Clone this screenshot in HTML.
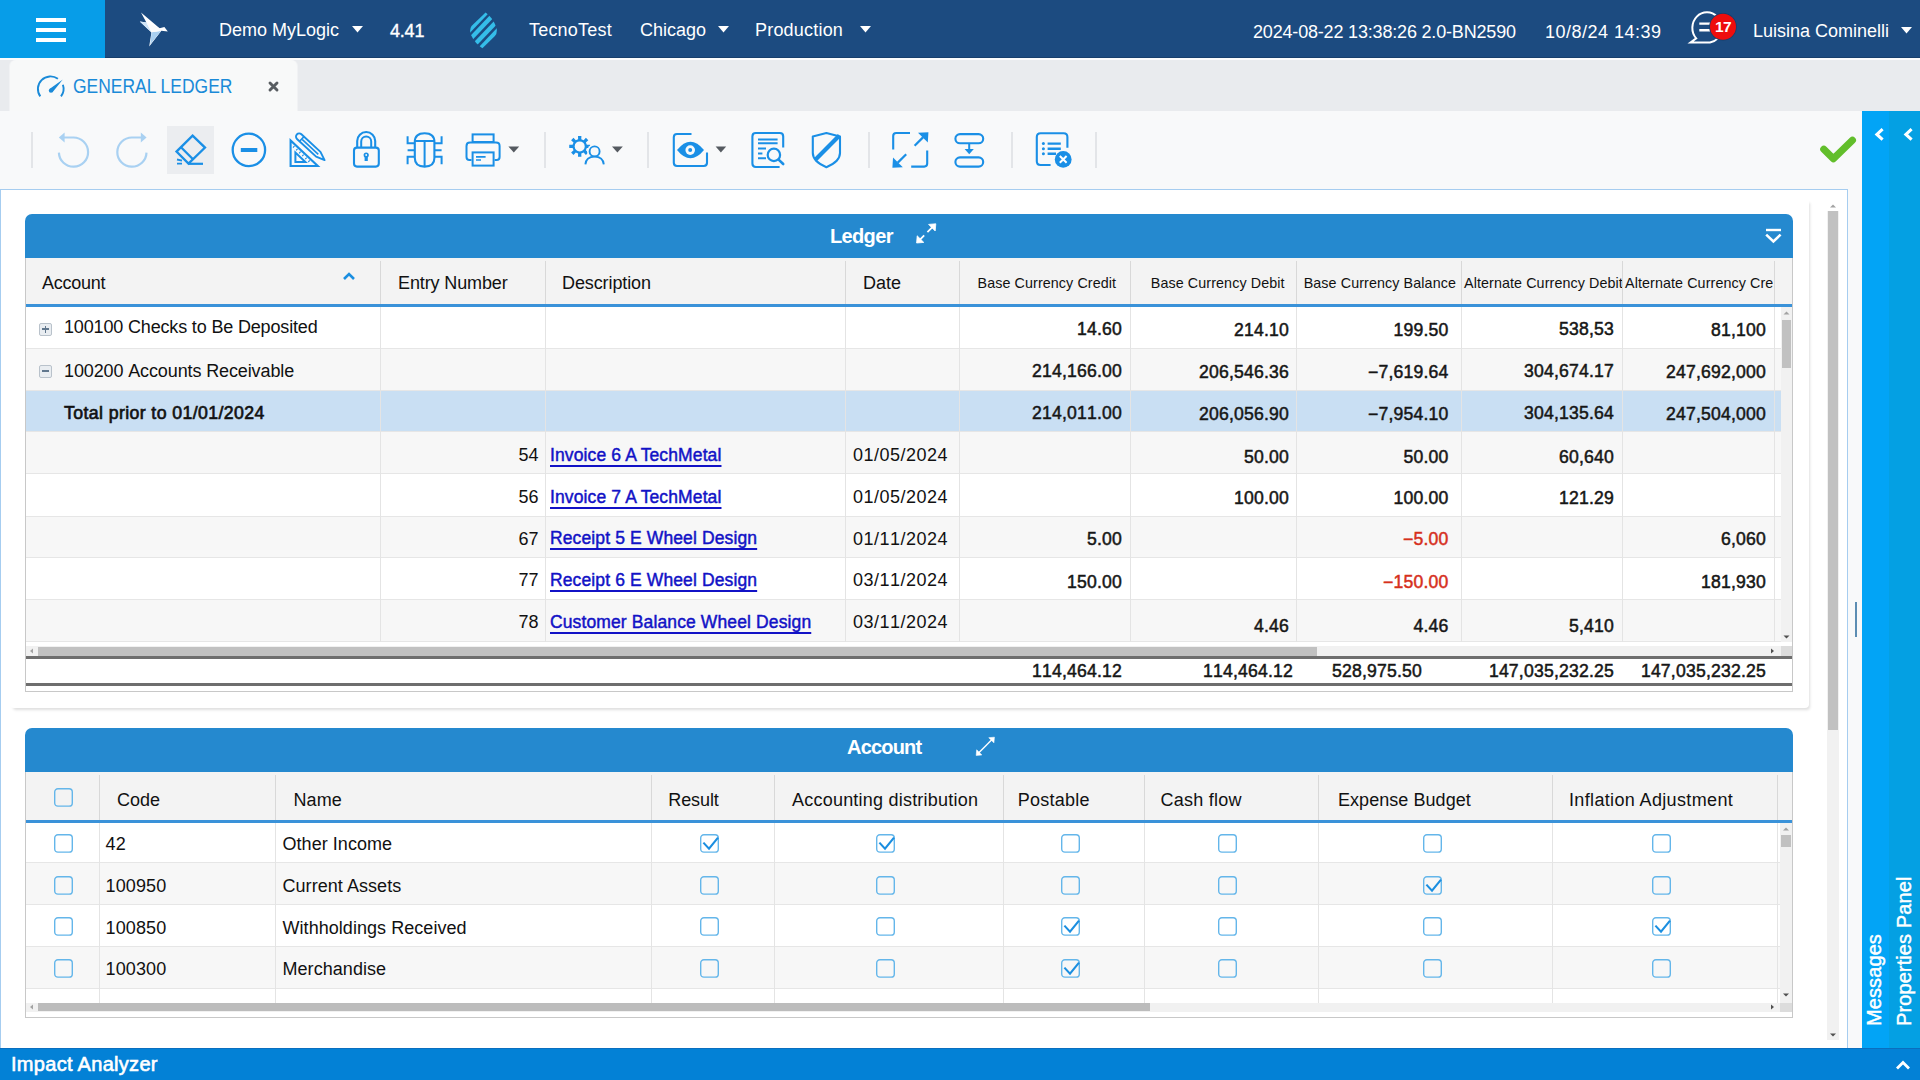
<!DOCTYPE html><html><head><meta charset="utf-8"><style>
html,body{margin:0;padding:0;width:1920px;height:1080px;overflow:hidden;background:#fff;}
body{position:relative;font-family:"Liberation Sans",sans-serif;}
.t{position:absolute;white-space:nowrap;line-height:1;}
.r{position:absolute;}
svg{position:absolute;overflow:visible;}
</style></head><body>

<div class="r" style="left:0px;top:0px;width:1920px;height:58px;background:#1c4b80;"></div>
<div class="r" style="left:0px;top:57px;width:1920px;height:1px;background:#173f6c;"></div>
<div class="r" style="left:0px;top:0px;width:105px;height:58px;background:#079de8;"></div>
<div class="r" style="left:36px;top:18px;width:30px;height:4px;background:#fff;"></div>
<div class="r" style="left:36px;top:28px;width:30px;height:4px;background:#fff;"></div>
<div class="r" style="left:36px;top:38px;width:30px;height:4px;background:#fff;"></div>
<svg style="left:0;top:0" width="200" height="58" viewBox="0 0 200 58"><path d="M141 12.4 L159.6 28.2 L164.4 27 L167.8 31.6 L161.4 30.8 L149.2 46.6 L151.4 32.4 L139.8 21.4 L146.4 22.6 Z" fill="#fff"/><path d="M151.6 32.2 L161 31 L150.2 44.6 Z" fill="#a8cff0"/><path d="M139.8 21.4 L146.4 22.6 L151.6 32.2 Z" fill="#cfe5f8"/><path d="M146.4 22.6 L159.6 28.2 L161.4 30.8 L151.6 32.2 Z" fill="#fbfbfb"/></svg>
<div class="t" style="top:20.76px;font-size:18px;font-weight:400;color:#fff;left:219px;">Demo MyLogic</div>
<svg style="left:352px;top:26px" width="11" height="7" viewBox="0 0 11 7"><path d="M0 0H11L5.5 6.5Z" fill="#fff"/></svg>
<div class="t" style="top:21.66px;font-size:18px;font-weight:400;color:#fff;letter-spacing:-0.2px;left:390px;-webkit-text-stroke:0.35px #fff;">4.41</div>
<svg style="left:0;top:0" width="520" height="58" viewBox="0 0 520 58"><defs><clipPath id="dm"><path d="M485.6 12.4 Q493 17.5 496.6 28 Q497.5 33 495 36 L482.4 48.2 Q475 43.5 471 35 Q469 30 471.5 26 Z"/></clipPath></defs><g clip-path="url(#dm)" stroke="#35bde9" stroke-width="4.3"><path d="M464.20 35.80 L491.80 6.80"/><path d="M467.70 41.70 L495.30 12.70"/><path d="M471.80 47.50 L499.40 18.50"/><path d="M475.20 54.10 L502.80 25.10"/></g></svg>
<div class="t" style="top:20.76px;font-size:18px;font-weight:400;color:#fff;letter-spacing:0.2px;left:529px;">TecnoTest</div>
<div class="t" style="top:20.76px;font-size:18px;font-weight:400;color:#fff;left:640px;">Chicago</div>
<svg style="left:718px;top:26px" width="11" height="7" viewBox="0 0 11 7"><path d="M0 0H11L5.5 6.5Z" fill="#fff"/></svg>
<div class="t" style="top:20.76px;font-size:18px;font-weight:400;color:#fff;letter-spacing:0.2px;left:755px;">Production</div>
<svg style="left:860px;top:26px" width="11" height="7" viewBox="0 0 11 7"><path d="M0 0H11L5.5 6.5Z" fill="#fff"/></svg>
<div class="t" style="top:22.76px;font-size:18px;font-weight:400;color:#fff;letter-spacing:-0.18px;left:1253px;">2024-08-22 13:38:26 2.0-BN2590</div>
<div class="t" style="top:22.76px;font-size:18px;font-weight:400;color:#fff;letter-spacing:0.5px;left:1545px;">10/8/24 14:39</div>
<svg style="left:0;top:0" width="1920" height="58" viewBox="0 0 1920 58"><path d="M1710 42.6 H1690.5 L1696.2 38.4 A14.6 15.6 0 1 1 1717.5 38.6 A14.6 15.6 0 0 1 1710 42.6 Z" fill="none" stroke="#fff" stroke-width="2"/><path d="M1699.3 23.6 H1712 M1699.3 30.3 H1712" stroke="#fff" stroke-width="2.4"/><circle cx="1723" cy="26.8" r="13.8" fill="#173e6a"/><circle cx="1723" cy="26.8" r="13" fill="#ee0d0d"/><text x="1723" y="32.4" text-anchor="middle" font-family="Liberation Sans" font-weight="700" font-size="15.5" fill="#fff" letter-spacing="-0.6">17</text></svg>
<div class="t" style="top:21.76px;font-size:18px;font-weight:400;color:#fff;left:1753px;">Luisina Cominelli</div>
<svg style="left:1901px;top:27px" width="11" height="7" viewBox="0 0 11 7"><path d="M0 0H11L5.5 6.5Z" fill="#fff"/></svg>
<div class="r" style="left:0px;top:58px;width:1920px;height:53px;background:#e9ebee;"></div>
<div class="r" style="left:0px;top:58px;width:1920px;height:2px;background:#fbfcfd;"></div>
<div class="r" style="left:10px;top:60px;width:287px;height:51px;background:#f8f9f9;border-radius:6px 6px 0 0;box-shadow:-1px 0 0 #f1f2f4, 1px 0 0 #f1f2f4;"></div>
<svg style="left:0;top:58px" width="100" height="60" viewBox="0 58 100 60"><path d="M40.3 96.4 A12.6 12.6 0 0 1 57.9 78.8 M62.9 84.8 A12.6 12.6 0 0 1 61 96.4" fill="none" stroke="#1a8ad8" stroke-width="1.9"/><circle cx="51" cy="90.6" r="2.2" fill="#1a8ad8"/><path d="M52.5 92.2 L62.8 79.4 L49.5 89 Z" fill="#1a8ad8"/></svg>
<div class="t" style="top:76.98px;font-size:19.4px;font-weight:400;color:#1a8ad8;left:73px;transform:scaleX(0.9);transform-origin:0 0;">GENERAL LEDGER</div>
<svg style="left:268px;top:81px" width="11" height="11" viewBox="0 0 11 11"><path d="M2 2L9 9M9 2L2 9" stroke="#585d61" stroke-width="2.9" stroke-linecap="round"/></svg>
<div class="r" style="left:0px;top:111px;width:1862px;height:79px;background:#f8f9fa;"></div>
<svg style="left:0;top:0" width="1920" height="1080" viewBox="0 0 1920 1080"><rect x="31" y="132" width="2" height="36" fill="#e3e5e8"/><rect x="544" y="132" width="2" height="36" fill="#e3e5e8"/><rect x="647" y="132" width="2" height="36" fill="#e3e5e8"/><rect x="868" y="132" width="2" height="36" fill="#e3e5e8"/><rect x="1011" y="132" width="2" height="36" fill="#e3e5e8"/><rect x="1095" y="132" width="2" height="36" fill="#e3e5e8"/><rect x="167" y="126" width="47" height="48" fill="#ebedf0"/><path d="M63 137.5 H73.5 A14.6 14.6 0 1 1 58.9 152.6" fill="none" stroke="#a9d1f2" stroke-width="2.2"/><path d="M58.8 137.5 L64.6 132.4 L64.6 142.6 Z" fill="#a9d1f2"/><path d="M142.4 137.5 H131.9 A14.6 14.6 0 1 0 146.5 152.6" fill="none" stroke="#a9d1f2" stroke-width="2.2"/><path d="M146.6 137.5 L140.8 132.4 L140.8 142.6 Z" fill="#a9d1f2"/><path d="M192.6 135.6 L205 147.6 L188.5 163.6 L176.5 151.6 Z" fill="none" stroke="#1a8fe6" stroke-width="2.3" stroke-linejoin="miter"/><path d="M181 147.2 L193 159.2" stroke="#1a8fe6" stroke-width="2.3"/><path d="M188.5 163.8 H203" stroke="#1a8fe6" stroke-width="2.2"/><path d="M177 159.5 L182 160.6 M177 163.6 H182" stroke="#1a8fe6" stroke-width="1.8"/><circle cx="248.9" cy="149.9" r="16.2" fill="none" stroke="#1a8fe6" stroke-width="2.3"/><rect x="240.8" y="148" width="16.5" height="4" fill="#1a8fe6"/><path d="M290.6 140.4 V166 H317.8 Z" fill="none" stroke="#1a8fe6" stroke-width="2.1" stroke-linejoin="miter"/><path d="M295.4 152.6 V162 H305.4 Z" fill="none" stroke="#1a8fe6" stroke-width="2"/><path d="M294.50 145.97 l-1.51 1.60 M297.55 148.86 l-1.51 1.60 M300.61 151.74 l-1.51 1.60 M303.67 154.63 l-1.51 1.60 M306.73 157.52 l-1.51 1.60 M309.78 160.40 l-1.51 1.60 " stroke="#1a8fe6" stroke-width="1.1"/><path d="M297 138.95 A3.2 3.2 0 0 1 301.4 134.25 L320.45 151.9 L324.6 160.1 L316.1 156.6 Z" fill="none" stroke="#1a8fe6" stroke-width="1.9" stroke-linejoin="round"/><path d="M302.4 139.6 L318.3 154.3 M299.6 141.3 L304 136.6" stroke="#1a8fe6" stroke-width="1.6"/><rect x="354" y="147.6" width="24.8" height="19" rx="3" fill="none" stroke="#1a8fe6" stroke-width="2.1"/><path d="M357.2 147.6 V141 A9 9 0 0 1 375.2 141 V147.6" fill="none" stroke="#1a8fe6" stroke-width="2.1"/><path d="M361.2 147.6 V141.5 A5 5 0 0 1 371.2 141.5 V147.6" fill="none" stroke="#1a8fe6" stroke-width="2"/><circle cx="366.2" cy="155" r="2.6" fill="#1a8fe6"/><rect x="364.6" y="155" width="3.2" height="6" fill="#1a8fe6"/><circle cx="366.2" cy="155" r="0.9" fill="#f8f9fa"/><path d="M414.8 142 Q414.8 133.2 424.6 133.2 Q434.4 133.2 434.4 142 V158 Q434.4 166.6 424.6 166.6 Q414.8 166.6 414.8 158 Z" fill="none" stroke="#1a8fe6" stroke-width="2.1"/><path d="M414.8 141 H434.4 M424.6 141 V166.6" stroke="#1a8fe6" stroke-width="2"/><path d="M407.6 136.2 V143.2 H414.8 M407.6 150.2 H414.8 M407.6 164.2 V156.8 H414.8" fill="none" stroke="#1a8fe6" stroke-width="2"/><path d="M441.6 136.2 V143.2 H434.4 M441.6 150.2 H434.4 M441.6 164.2 V156.8 H434.4" fill="none" stroke="#1a8fe6" stroke-width="2"/><rect x="472.6" y="134.4" width="21" height="7.6" fill="none" stroke="#1a8fe6" stroke-width="2"/><path d="M471.5 160 H469.5 Q466.5 160 466.5 157 V146 Q466.5 142.6 470 142.6 H496 Q499.6 142.6 499.6 146 V157 Q499.6 160 496.6 160 H494.6" fill="none" stroke="#1a8fe6" stroke-width="2"/><rect x="472.6" y="152.4" width="21" height="13.2" fill="none" stroke="#1a8fe6" stroke-width="2"/><path d="M476 156.8 H485.6 M476 160 H481" stroke="#1a8fe6" stroke-width="1.7"/><path d="M508.4 146.4 H519.2 L513.8 152.4 Z" fill="#555a60"/><path d="M586.82 144.81 L590.16 144.71 L590.16 148.09 L586.82 147.99 L585.86 150.31 L588.29 152.61 L585.91 154.99 L583.61 152.56 L581.29 153.52 L581.39 156.86 L578.01 156.86 L578.11 153.52 L575.79 152.56 L573.49 154.99 L571.11 152.61 L573.54 150.31 L572.58 147.99 L569.24 148.09 L569.24 144.71 L572.58 144.81 L573.54 142.49 L571.11 140.19 L573.49 137.81 L575.79 140.24 L578.11 139.28 L578.01 135.94 L581.39 135.94 L581.29 139.28 L583.61 140.24 L585.91 137.81 L588.29 140.19 L585.86 142.49 Z" fill="#1a8fe6"/><circle cx="579.7" cy="146.4" r="5" fill="#f8f9fa"/><circle cx="594.6" cy="151.6" r="7.6" fill="#f8f9fa"/><path d="M583 168 Q584 158 594.6 158 Q605 158 606 168 Z" fill="#f8f9fa"/><circle cx="594.6" cy="151.4" r="5" fill="none" stroke="#1a8fe6" stroke-width="1.9"/><path d="M585.4 164.4 Q586 156.6 594.6 156.6 Q603 156.6 603.8 164.4" fill="none" stroke="#1a8fe6" stroke-width="1.9"/><path d="M612 146.4 H622.8 L617.4 152.4 Z" fill="#555a60"/><path d="M691.5 134 H677 Q673.8 134 673.8 137.2 V162.8 Q673.8 166 677 166 H703.8 Q707 166 707 162.8 V152.6" fill="none" stroke="#1a8fe6" stroke-width="2.1"/><path d="M677 150.1 Q690.4 133.6 704 150.1 Q690.4 166.6 677 150.1 Z" fill="#1a8fe6"/><circle cx="690.2" cy="150.1" r="4.8" fill="#f8f9fa"/><circle cx="690.2" cy="150.1" r="2" fill="#1a8fe6"/><path d="M715.6 146.6 H726.2 L720.9 152.6 Z" fill="#555a60"/><path d="M783.2 147.6 V136.4 Q783.2 133 779.8 133 H755.8 Q752.4 133 752.4 136.4 V163.6 Q752.4 167 755.8 167 H779.6" fill="none" stroke="#1a8fe6" stroke-width="2.1"/><path d="M758 139.4 H777.6 M758 143.3 H777.6 M758 148.6 H766 M758 153.4 H762.4 M758 158.2 H766" stroke="#1a8fe6" stroke-width="2"/><circle cx="773.9" cy="154.9" r="6.2" fill="none" stroke="#1a8fe6" stroke-width="2.2"/><path d="M778.6 159.6 L783.2 164" stroke="#1a8fe6" stroke-width="2.6" stroke-linecap="round"/><path d="M826.4 133 L840 136.4 V153 Q840 161.5 826.4 167.2 Q812.8 161.5 812.8 153 V136.4 Z" fill="none" stroke="#1a8fe6" stroke-width="2.1" stroke-linejoin="round"/><path d="M815.6 159.4 L839.4 135.6" stroke="#1a8fe6" stroke-width="4.2"/><path d="M910 133 H896.2 Q893.2 133 893.2 136 V149.4" fill="none" stroke="#1a8fe6" stroke-width="2.1"/><path d="M927.2 150.4 V163.6 Q927.2 166.6 924.2 166.6 H911.2" fill="none" stroke="#1a8fe6" stroke-width="2.1"/><path d="M928.4 132.2 L927.8 142.6 L918 132.8 Z" fill="#1a8fe6"/><path d="M914.6 145.8 L923 137.4" stroke="#1a8fe6" stroke-width="2.2"/><path d="M892.4 167.8 L893 157.4 L902.8 167.2 Z" fill="#1a8fe6"/><path d="M906.2 154.2 L897.8 162.6" stroke="#1a8fe6" stroke-width="2.2"/><rect x="955.4" y="134.1" width="27.8" height="9.2" rx="4.6" fill="none" stroke="#1a8fe6" stroke-width="2.1"/><rect x="955.4" y="157.4" width="27.8" height="9.2" rx="4.6" fill="none" stroke="#1a8fe6" stroke-width="2.1"/><path d="M969.2 143.3 V150" stroke="#1a8fe6" stroke-width="2"/><path d="M964.6 149 H973.8 L969.2 154.2 Z" fill="#1a8fe6"/><path d="M1067.4 147.8 V137 Q1067.4 133.2 1063.6 133.2 H1040.6 Q1036.8 133.2 1036.8 137 V161.2 Q1036.8 165 1040.6 165 H1050.6" fill="none" stroke="#1a8fe6" stroke-width="2.1"/><circle cx="1043.4" cy="143.6" r="1.5" fill="#1a8fe6"/><circle cx="1043.4" cy="148.7" r="1.5" fill="#1a8fe6"/><circle cx="1043.4" cy="153.7" r="1.5" fill="#1a8fe6"/><path d="M1047.6 143.6 H1060.8 M1047.6 148.7 H1060.8 M1047.6 153.7 H1056" stroke="#1a8fe6" stroke-width="2.4"/><circle cx="1063.2" cy="159.4" r="8.4" fill="#1a8fe6"/><path d="M1059.8 156 L1066.6 162.8 M1066.6 156 L1059.8 162.8" stroke="#fff" stroke-width="2"/><path d="M1823.8 149.2 L1833.4 158.8 L1852.4 140.2" fill="none" stroke="#62be2b" stroke-width="7.2" stroke-linecap="round" stroke-linejoin="round"/></svg>
<div class="r" style="left:0px;top:189px;width:1848px;height:859px;background:#ffffff;box-sizing:border-box;border:1px solid #a6cdf0;border-bottom:none;"></div>
<div class="r" style="left:1848px;top:190px;width:14px;height:858px;background:#f8f9fa;"></div>
<div class="r" style="left:1827px;top:211px;width:12px;height:829px;background:#f1f1f1;"></div>
<div class="r" style="left:1828px;top:211px;width:10px;height:519px;background:#c1c1c1;"></div>
<svg style="left:1827px;top:201px" width="12" height="10" viewBox="0 0 12 10"><path d="M3 6.5 L6 3.5 L9 6.5Z" fill="#a3a3a3"/></svg>
<svg style="left:1827px;top:1030px" width="12" height="10" viewBox="0 0 12 10"><path d="M3 3.5 L6 6.5 L9 3.5Z" fill="#505050"/></svg>
<div class="r" style="left:10px;top:199px;width:1799px;height:509px;background:#fff;border-radius:0 0 4px 4px;box-shadow:2px 3px 3px -1px rgba(0,0,0,0.13);"></div>
<div class="r" style="left:25px;top:258px;width:1768px;height:434px;background:#fff;box-sizing:border-box;border:1px solid #c8c8c8;border-top:none;"></div>
<div class="r" style="left:25px;top:214px;width:1768px;height:44px;background:#2589cf;border-radius:7px 7px 0 0;"></div>
<div class="t" style="top:226.07px;font-size:20px;font-weight:700;color:#fff;letter-spacing:-0.65px;left:830px;">Ledger</div>
<svg style="left:0;top:0" width="1920" height="260" viewBox="0 0 1920 260"><path d="M919 240.6 L924.2 235.4 M927.4 232.2 L933.4 226.2" stroke="#fff" stroke-width="1.8"/><path d="M935.8 223.8 L935.2 231 L928.6 224.4 Z M916.6 243 L917.2 235.8 L923.8 242.4 Z" fill="#fff" stroke="#fff" stroke-width="0.8" stroke-linejoin="round"/></svg>
<svg style="left:1763px;top:227px" width="20" height="18" viewBox="0 0 20 18"><path d="M3 3 H18" stroke="#fff" stroke-width="2.4"/><path d="M3.2 7.6 L10.4 14.4 L17.6 7.6" stroke="#fff" stroke-width="2.6" fill="none"/></svg>
<div class="r" style="left:26px;top:258px;width:1766px;height:46px;background:#f3f3f3;"></div>
<div class="r" style="left:26px;top:304px;width:1766px;height:3px;background:#3a92d9;"></div>
<div class="r" style="left:380px;top:261px;width:1px;height:43px;background:#d8d8d8;"></div>
<div class="r" style="left:545px;top:261px;width:1px;height:43px;background:#d8d8d8;"></div>
<div class="r" style="left:845px;top:261px;width:1px;height:43px;background:#d8d8d8;"></div>
<div class="r" style="left:959px;top:261px;width:1px;height:43px;background:#d8d8d8;"></div>
<div class="r" style="left:1130px;top:261px;width:1px;height:43px;background:#d8d8d8;"></div>
<div class="r" style="left:1296px;top:261px;width:1px;height:43px;background:#d8d8d8;"></div>
<div class="r" style="left:1461px;top:261px;width:1px;height:43px;background:#d8d8d8;"></div>
<div class="r" style="left:1622px;top:261px;width:1px;height:43px;background:#d8d8d8;"></div>
<div class="r" style="left:1774px;top:261px;width:1px;height:43px;background:#d8d8d8;"></div>
<div class="t" style="top:273.76px;font-size:18px;font-weight:400;color:#111;letter-spacing:-0.25px;left:42px;">Account</div>
<svg style="left:342px;top:271px" width="14" height="10" viewBox="0 0 14 10"><path d="M2 8 L7 3 L12 8" stroke="#1a8ee0" stroke-width="2.6" fill="none"/></svg>
<div class="t" style="top:273.76px;font-size:18px;font-weight:400;color:#111;letter-spacing:-0.12px;left:398px;">Entry Number</div>
<div class="t" style="top:273.76px;font-size:18px;font-weight:400;color:#111;letter-spacing:-0.1px;left:562px;">Description</div>
<div class="t" style="top:273.76px;font-size:18px;font-weight:400;color:#111;left:863px;">Date</div>
<div class="t" style="top:276.40px;font-size:14.3px;font-weight:400;color:#111;letter-spacing:0.1px;left:977.5px;">Base Currency Credit</div>
<div class="t" style="top:276.40px;font-size:14.3px;font-weight:400;color:#111;letter-spacing:0.1px;left:1150.8px;">Base Currency Debit</div>
<div class="t" style="top:276.40px;font-size:14.3px;font-weight:400;color:#111;letter-spacing:0.1px;left:1303.7px;">Base Currency Balance</div>
<div style="position:absolute;left:1462px;top:258px;width:160px;height:46px;overflow:hidden">
<div class="t" style="top:18.40px;font-size:14.3px;font-weight:400;color:#111;letter-spacing:0.1px;left:2px;">Alternate Currency Debit</div>
</div>
<div style="position:absolute;left:1623px;top:258px;width:150px;height:46px;overflow:hidden">
<div class="t" style="top:18.40px;font-size:14.3px;font-weight:400;color:#111;letter-spacing:0.1px;left:2px;">Alternate Currency Credit</div>
</div>
<div class="r" style="left:26px;top:307px;width:1755px;height:42px;background:#fff;"></div>
<div class="r" style="left:26px;top:348px;width:1755px;height:1px;background:#e6e6e6;"></div>
<div class="r" style="left:26px;top:349px;width:1755px;height:41.69999999999999px;background:#f7f7f7;"></div>
<div class="r" style="left:26px;top:389.7px;width:1755px;height:1px;background:#e6e6e6;"></div>
<div class="r" style="left:26px;top:390.7px;width:1755px;height:41.60000000000002px;background:#c9dff3;"></div>
<div class="r" style="left:26px;top:431.3px;width:1755px;height:1px;background:#e6e6e6;"></div>
<div class="r" style="left:26px;top:432.3px;width:1755px;height:42.0px;background:#f7f7f7;"></div>
<div class="r" style="left:26px;top:473.3px;width:1755px;height:1px;background:#e6e6e6;"></div>
<div class="r" style="left:26px;top:474.3px;width:1755px;height:42.19999999999999px;background:#fff;"></div>
<div class="r" style="left:26px;top:515.5px;width:1755px;height:1px;background:#e6e6e6;"></div>
<div class="r" style="left:26px;top:516.5px;width:1755px;height:41.799999999999955px;background:#f7f7f7;"></div>
<div class="r" style="left:26px;top:557.3px;width:1755px;height:1px;background:#e6e6e6;"></div>
<div class="r" style="left:26px;top:558.3px;width:1755px;height:41.700000000000045px;background:#fff;"></div>
<div class="r" style="left:26px;top:599px;width:1755px;height:1px;background:#e6e6e6;"></div>
<div class="r" style="left:26px;top:600px;width:1755px;height:41.799999999999955px;background:#f7f7f7;"></div>
<div class="r" style="left:26px;top:640.8px;width:1755px;height:1px;background:#e6e6e6;"></div>
<div class="r" style="left:380px;top:307px;width:1px;height:335px;background:#e4e4e4;"></div>
<div class="r" style="left:545px;top:307px;width:1px;height:335px;background:#e4e4e4;"></div>
<div class="r" style="left:845px;top:307px;width:1px;height:335px;background:#e4e4e4;"></div>
<div class="r" style="left:959px;top:307px;width:1px;height:335px;background:#e4e4e4;"></div>
<div class="r" style="left:1130px;top:307px;width:1px;height:335px;background:#e4e4e4;"></div>
<div class="r" style="left:1296px;top:307px;width:1px;height:335px;background:#e4e4e4;"></div>
<div class="r" style="left:1461px;top:307px;width:1px;height:335px;background:#e4e4e4;"></div>
<div class="r" style="left:1622px;top:307px;width:1px;height:335px;background:#e4e4e4;"></div>
<div class="r" style="left:1774px;top:307px;width:1px;height:335px;background:#e4e4e4;"></div>
<div class="r" style="left:1781px;top:307px;width:11px;height:335px;background:#f1f1f1;"></div>
<div class="r" style="left:1782px;top:320px;width:9px;height:48px;background:#c1c1c1;"></div>
<svg style="left:1781px;top:308px" width="11" height="10" viewBox="0 0 11 10"><path d="M2.5 6.5 L5.5 3.5 L8.5 6.5Z" fill="#a3a3a3"/></svg>
<svg style="left:1781px;top:632px" width="11" height="10" viewBox="0 0 11 10"><path d="M2.5 3.5 L5.5 6.5 L8.5 3.5Z" fill="#505050"/></svg>
<div class="r" style="left:39px;top:322.5px;width:13px;height:13px;background:#e9edf1;box-sizing:border-box;border:1px solid #b9c2cb;border-radius:2px;"></div>
<div class="r" style="left:42px;top:328.2px;width:7px;height:1.6px;background:#61778d;"></div>
<div class="r" style="left:44.7px;top:325.5px;width:1.6px;height:7px;background:#61778d;"></div>
<div class="r" style="left:39px;top:364.5px;width:13px;height:13px;background:#e9edf1;box-sizing:border-box;border:1px solid #b9c2cb;border-radius:2px;"></div>
<div class="r" style="left:42px;top:370.2px;width:7px;height:1.6px;background:#61778d;"></div>
<div class="t" style="top:318.36px;font-size:18px;font-weight:400;color:#111;letter-spacing:-0.16px;left:64px;font-kerning:none;">100100 Checks to Be Deposited</div>
<div class="t" style="top:361.76px;font-size:18px;font-weight:400;color:#111;letter-spacing:-0.12px;left:64px;font-kerning:none;">100200 Accounts Receivable</div>
<div class="t" style="top:405.22px;font-size:17.7px;font-weight:400;color:#111;letter-spacing:0.4px;left:64px;-webkit-text-stroke:0.65px #111;">Total prior to 01/01/2024</div>
<div class="t" style="top:321.00px;font-size:17.6px;font-weight:400;color:#161616;letter-spacing:0.2px;right:798px;-webkit-text-stroke:0.5px #161616;font-kerning:none;">14.60</div>
<div class="t" style="top:322.00px;font-size:17.6px;font-weight:400;color:#161616;letter-spacing:0.2px;right:631px;-webkit-text-stroke:0.5px #161616;font-kerning:none;">214.10</div>
<div class="t" style="top:322.00px;font-size:17.6px;font-weight:400;color:#161616;letter-spacing:0.2px;right:471.5px;-webkit-text-stroke:0.5px #161616;font-kerning:none;">199.50</div>
<div class="t" style="top:321.00px;font-size:17.6px;font-weight:400;color:#161616;letter-spacing:0.2px;right:306px;-webkit-text-stroke:0.5px #161616;font-kerning:none;">538,53</div>
<div class="t" style="top:322.00px;font-size:17.6px;font-weight:400;color:#161616;letter-spacing:0.2px;right:154px;-webkit-text-stroke:0.5px #161616;font-kerning:none;">81,100</div>
<div class="t" style="top:363.30px;font-size:17.6px;font-weight:400;color:#161616;letter-spacing:0.2px;right:798px;-webkit-text-stroke:0.5px #161616;font-kerning:none;">214,166.00</div>
<div class="t" style="top:364.30px;font-size:17.6px;font-weight:400;color:#161616;letter-spacing:0.2px;right:631px;-webkit-text-stroke:0.5px #161616;font-kerning:none;">206,546.36</div>
<div class="t" style="top:364.30px;font-size:17.6px;font-weight:400;color:#161616;letter-spacing:0.2px;right:471.5px;-webkit-text-stroke:0.5px #161616;font-kerning:none;">−7,619.64</div>
<div class="t" style="top:363.30px;font-size:17.6px;font-weight:400;color:#161616;letter-spacing:0.2px;right:306px;-webkit-text-stroke:0.5px #161616;font-kerning:none;">304,674.17</div>
<div class="t" style="top:364.30px;font-size:17.6px;font-weight:400;color:#161616;letter-spacing:0.2px;right:154px;-webkit-text-stroke:0.5px #161616;font-kerning:none;">247,692,000</div>
<div class="t" style="top:405.30px;font-size:17.6px;font-weight:400;color:#161616;letter-spacing:0.2px;right:798px;-webkit-text-stroke:0.5px #161616;font-kerning:none;">214,011.00</div>
<div class="t" style="top:406.30px;font-size:17.6px;font-weight:400;color:#161616;letter-spacing:0.2px;right:631px;-webkit-text-stroke:0.5px #161616;font-kerning:none;">206,056.90</div>
<div class="t" style="top:406.30px;font-size:17.6px;font-weight:400;color:#161616;letter-spacing:0.2px;right:471.5px;-webkit-text-stroke:0.5px #161616;font-kerning:none;">−7,954.10</div>
<div class="t" style="top:405.30px;font-size:17.6px;font-weight:400;color:#161616;letter-spacing:0.2px;right:306px;-webkit-text-stroke:0.5px #161616;font-kerning:none;">304,135.64</div>
<div class="t" style="top:406.30px;font-size:17.6px;font-weight:400;color:#161616;letter-spacing:0.2px;right:154px;-webkit-text-stroke:0.5px #161616;font-kerning:none;">247,504,000</div>
<div class="t" style="top:446.36px;font-size:18px;font-weight:400;color:#111;right:1381.5px;">54</div>
<div class="t" style="top:446.79px;font-size:17.5px;font-weight:400;color:#1212c6;letter-spacing:0.12px;left:550px;-webkit-text-stroke:0.45px #1212c6;text-decoration:underline;text-underline-offset:3.5px;text-decoration-thickness:1.6px;text-decoration-skip-ink:none;">Invoice 6 A TechMetal</div>
<div class="t" style="top:446.36px;font-size:18px;font-weight:400;color:#111;letter-spacing:0.5px;left:853px;font-kerning:none;">01/05/2024</div>
<div class="t" style="top:448.90px;font-size:17.6px;font-weight:400;color:#161616;letter-spacing:0.2px;right:631px;-webkit-text-stroke:0.5px #161616;font-kerning:none;">50.00</div>
<div class="t" style="top:448.90px;font-size:17.6px;font-weight:400;color:#161616;letter-spacing:0.2px;right:471.5px;-webkit-text-stroke:0.5px #161616;font-kerning:none;">50.00</div>
<div class="t" style="top:448.90px;font-size:17.6px;font-weight:400;color:#161616;letter-spacing:0.2px;right:306px;-webkit-text-stroke:0.5px #161616;font-kerning:none;">60,640</div>
<div class="t" style="top:488.26px;font-size:18px;font-weight:400;color:#111;right:1381.5px;">56</div>
<div class="t" style="top:488.69px;font-size:17.5px;font-weight:400;color:#1212c6;letter-spacing:0.12px;left:550px;-webkit-text-stroke:0.45px #1212c6;text-decoration:underline;text-underline-offset:3.5px;text-decoration-thickness:1.6px;text-decoration-skip-ink:none;">Invoice 7 A TechMetal</div>
<div class="t" style="top:488.26px;font-size:18px;font-weight:400;color:#111;letter-spacing:0.5px;left:853px;font-kerning:none;">01/05/2024</div>
<div class="t" style="top:489.80px;font-size:17.6px;font-weight:400;color:#161616;letter-spacing:0.2px;right:631px;-webkit-text-stroke:0.5px #161616;font-kerning:none;">100.00</div>
<div class="t" style="top:489.80px;font-size:17.6px;font-weight:400;color:#161616;letter-spacing:0.2px;right:471.5px;-webkit-text-stroke:0.5px #161616;font-kerning:none;">100.00</div>
<div class="t" style="top:489.80px;font-size:17.6px;font-weight:400;color:#161616;letter-spacing:0.2px;right:306px;-webkit-text-stroke:0.5px #161616;font-kerning:none;">121.29</div>
<div class="t" style="top:529.86px;font-size:18px;font-weight:400;color:#111;right:1381.5px;">67</div>
<div class="t" style="top:530.29px;font-size:17.5px;font-weight:400;color:#1212c6;letter-spacing:0.12px;left:550px;-webkit-text-stroke:0.45px #1212c6;text-decoration:underline;text-underline-offset:3.5px;text-decoration-thickness:1.6px;text-decoration-skip-ink:none;">Receipt 5 E Wheel Design</div>
<div class="t" style="top:529.86px;font-size:18px;font-weight:400;color:#111;letter-spacing:0.5px;left:853px;font-kerning:none;">01/11/2024</div>
<div class="t" style="top:531.40px;font-size:17.6px;font-weight:400;color:#161616;letter-spacing:0.2px;right:798px;-webkit-text-stroke:0.5px #161616;font-kerning:none;">5.00</div>
<div class="t" style="top:531.40px;font-size:17.6px;font-weight:400;color:#d6301c;letter-spacing:0.2px;right:471.5px;-webkit-text-stroke:0.5px #d6301c;font-kerning:none;">−5.00</div>
<div class="t" style="top:531.40px;font-size:17.6px;font-weight:400;color:#161616;letter-spacing:0.2px;right:154px;-webkit-text-stroke:0.5px #161616;font-kerning:none;">6,060</div>
<div class="t" style="top:571.26px;font-size:18px;font-weight:400;color:#111;right:1381.5px;">77</div>
<div class="t" style="top:571.69px;font-size:17.5px;font-weight:400;color:#1212c6;letter-spacing:0.12px;left:550px;-webkit-text-stroke:0.45px #1212c6;text-decoration:underline;text-underline-offset:3.5px;text-decoration-thickness:1.6px;text-decoration-skip-ink:none;">Receipt 6 E Wheel Design</div>
<div class="t" style="top:571.26px;font-size:18px;font-weight:400;color:#111;letter-spacing:0.5px;left:853px;font-kerning:none;">03/11/2024</div>
<div class="t" style="top:573.80px;font-size:17.6px;font-weight:400;color:#161616;letter-spacing:0.2px;right:798px;-webkit-text-stroke:0.5px #161616;font-kerning:none;">150.00</div>
<div class="t" style="top:573.80px;font-size:17.6px;font-weight:400;color:#d6301c;letter-spacing:0.2px;right:471.5px;-webkit-text-stroke:0.5px #d6301c;font-kerning:none;">−150.00</div>
<div class="t" style="top:573.80px;font-size:17.6px;font-weight:400;color:#161616;letter-spacing:0.2px;right:154px;-webkit-text-stroke:0.5px #161616;font-kerning:none;">181,930</div>
<div class="t" style="top:613.46px;font-size:18px;font-weight:400;color:#111;right:1381.5px;">78</div>
<div class="t" style="top:613.89px;font-size:17.5px;font-weight:400;color:#1212c6;letter-spacing:0.12px;left:550px;-webkit-text-stroke:0.45px #1212c6;text-decoration:underline;text-underline-offset:3.5px;text-decoration-thickness:1.6px;text-decoration-skip-ink:none;">Customer Balance Wheel Design</div>
<div class="t" style="top:613.46px;font-size:18px;font-weight:400;color:#111;letter-spacing:0.5px;left:853px;font-kerning:none;">03/11/2024</div>
<div class="t" style="top:617.60px;font-size:17.6px;font-weight:400;color:#161616;letter-spacing:0.2px;right:631px;-webkit-text-stroke:0.5px #161616;font-kerning:none;">4.46</div>
<div class="t" style="top:617.60px;font-size:17.6px;font-weight:400;color:#161616;letter-spacing:0.2px;right:471.5px;-webkit-text-stroke:0.5px #161616;font-kerning:none;">4.46</div>
<div class="t" style="top:617.60px;font-size:17.6px;font-weight:400;color:#161616;letter-spacing:0.2px;right:306px;-webkit-text-stroke:0.5px #161616;font-kerning:none;">5,410</div>
<div class="r" style="left:26px;top:646px;width:1766px;height:10px;background:#f1f1f1;"></div>
<div class="r" style="left:38px;top:647px;width:1279px;height:9px;background:#c1c1c1;"></div>
<svg style="left:26px;top:646px" width="12" height="10" viewBox="0 0 12 10"><path d="M7 2.5 L4 5 L7 7.5Z" fill="#a3a3a3"/></svg>
<svg style="left:1766px;top:646px" width="12" height="10" viewBox="0 0 12 10"><path d="M5 2.5 L8 5 L5 7.5Z" fill="#505050"/></svg>
<div class="r" style="left:1781px;top:646px;width:11px;height:10px;background:#dcdcdc;"></div>
<div class="r" style="left:26px;top:656px;width:1766px;height:2.5px;background:#6e6e6e;"></div>
<div class="r" style="left:26px;top:683px;width:1766px;height:3px;background:#6e6e6e;"></div>
<div class="t" style="top:663.30px;font-size:17.6px;font-weight:400;color:#161616;letter-spacing:0.2px;right:798px;-webkit-text-stroke:0.5px #161616;font-kerning:none;">114,464.12</div>
<div class="t" style="top:663.30px;font-size:17.6px;font-weight:400;color:#161616;letter-spacing:0.2px;right:627px;-webkit-text-stroke:0.5px #161616;font-kerning:none;">114,464.12</div>
<div class="t" style="top:663.30px;font-size:17.6px;font-weight:400;color:#161616;letter-spacing:0.2px;right:498px;-webkit-text-stroke:0.5px #161616;font-kerning:none;">528,975.50</div>
<div class="t" style="top:663.30px;font-size:17.6px;font-weight:400;color:#161616;letter-spacing:0.2px;right:306px;-webkit-text-stroke:0.5px #161616;font-kerning:none;">147,035,232.25</div>
<div class="t" style="top:663.30px;font-size:17.6px;font-weight:400;color:#161616;letter-spacing:0.2px;right:154px;-webkit-text-stroke:0.5px #161616;font-kerning:none;">147,035,232.25</div>
<div class="r" style="left:25px;top:771px;width:1768px;height:247px;background:#fff;box-sizing:border-box;border:1px solid #c8c8c8;border-top:none;"></div>
<div class="r" style="left:25px;top:728px;width:1768px;height:43.5px;background:#2589cf;border-radius:7px 7px 0 0;"></div>
<div class="t" style="top:736.57px;font-size:20px;font-weight:700;color:#fff;letter-spacing:-0.8px;left:847px;">Account</div>
<svg style="left:0;top:720px" width="1920" height="60" viewBox="0 720 1920 60"><path d="M978.6 753 L992 739.6" stroke="#fff" stroke-width="1.4"/><path d="M994.4 737.2 L993.9 742.8 L988.8 737.7 Z M976.2 755.4 L976.7 749.8 L981.8 754.9 Z" fill="#fff" stroke="#fff" stroke-width="0.6" stroke-linejoin="round"/></svg>
<div class="r" style="left:26px;top:771.5px;width:1766px;height:48px;background:#f3f3f3;"></div>
<div class="r" style="left:26px;top:819.5px;width:1766px;height:3px;background:#3a92d9;"></div>
<div class="r" style="left:99px;top:774.5px;width:1px;height:45px;background:#d8d8d8;"></div>
<div class="r" style="left:275px;top:774.5px;width:1px;height:45px;background:#d8d8d8;"></div>
<div class="r" style="left:650.5px;top:774.5px;width:1px;height:45px;background:#d8d8d8;"></div>
<div class="r" style="left:773.5px;top:774.5px;width:1px;height:45px;background:#d8d8d8;"></div>
<div class="r" style="left:1003px;top:774.5px;width:1px;height:45px;background:#d8d8d8;"></div>
<div class="r" style="left:1144px;top:774.5px;width:1px;height:45px;background:#d8d8d8;"></div>
<div class="r" style="left:1318px;top:774.5px;width:1px;height:45px;background:#d8d8d8;"></div>
<div class="r" style="left:1552px;top:774.5px;width:1px;height:45px;background:#d8d8d8;"></div>
<div class="r" style="left:1777px;top:774.5px;width:1px;height:45px;background:#d8d8d8;"></div>
<svg style="left:54px;top:787.5px" width="19" height="19" viewBox="0 0 19 19"><rect x="0.7" y="0.7" width="17.6" height="17.4" rx="3.2" fill="#f3f3f3" stroke="#64b6ea" stroke-width="1.4"/></svg>
<div class="t" style="top:791.26px;font-size:18px;font-weight:400;color:#111;left:117px;">Code</div>
<div class="t" style="top:791.26px;font-size:18px;font-weight:400;color:#111;letter-spacing:0.1px;left:293.5px;">Name</div>
<div class="t" style="top:791.26px;font-size:18px;font-weight:400;color:#111;letter-spacing:-0.1px;left:668.3px;">Result</div>
<div class="t" style="top:791.26px;font-size:18px;font-weight:400;color:#111;letter-spacing:0.22px;left:792px;">Accounting distribution</div>
<div class="t" style="top:791.26px;font-size:18px;font-weight:400;color:#111;letter-spacing:0.25px;left:1017.7px;">Postable</div>
<div class="t" style="top:791.26px;font-size:18px;font-weight:400;color:#111;letter-spacing:0.25px;left:1160.4px;">Cash flow</div>
<div class="t" style="top:791.26px;font-size:18px;font-weight:400;color:#111;letter-spacing:0.05px;left:1338px;">Expense Budget</div>
<div class="t" style="top:791.26px;font-size:18px;font-weight:400;color:#111;letter-spacing:0.35px;left:1569px;">Inflation Adjustment</div>
<div class="r" style="left:26px;top:822.5px;width:1755px;height:40.5px;background:#fff;"></div>
<div class="r" style="left:26px;top:862px;width:1755px;height:1px;background:#e6e6e6;"></div>
<div class="r" style="left:26px;top:863px;width:1755px;height:42.299999999999955px;background:#f7f7f7;"></div>
<div class="r" style="left:26px;top:904.3px;width:1755px;height:1px;background:#e6e6e6;"></div>
<div class="r" style="left:26px;top:905.3px;width:1755px;height:41.90000000000009px;background:#fff;"></div>
<div class="r" style="left:26px;top:946.2px;width:1755px;height:1px;background:#e6e6e6;"></div>
<div class="r" style="left:26px;top:947.2px;width:1755px;height:41.799999999999955px;background:#f7f7f7;"></div>
<div class="r" style="left:26px;top:988px;width:1755px;height:1px;background:#e6e6e6;"></div>
<div class="r" style="left:26px;top:989px;width:1755px;height:14px;background:#fff;"></div>
<div class="r" style="left:99px;top:822.5px;width:1px;height:180.5px;background:#e4e4e4;"></div>
<div class="r" style="left:275px;top:822.5px;width:1px;height:180.5px;background:#e4e4e4;"></div>
<div class="r" style="left:650.5px;top:822.5px;width:1px;height:180.5px;background:#e4e4e4;"></div>
<div class="r" style="left:773.5px;top:822.5px;width:1px;height:180.5px;background:#e4e4e4;"></div>
<div class="r" style="left:1003px;top:822.5px;width:1px;height:180.5px;background:#e4e4e4;"></div>
<div class="r" style="left:1144px;top:822.5px;width:1px;height:180.5px;background:#e4e4e4;"></div>
<div class="r" style="left:1318px;top:822.5px;width:1px;height:180.5px;background:#e4e4e4;"></div>
<div class="r" style="left:1552px;top:822.5px;width:1px;height:180.5px;background:#e4e4e4;"></div>
<div class="r" style="left:1777px;top:822.5px;width:1px;height:180.5px;background:#e4e4e4;"></div>
<svg style="left:53.6px;top:833.8px" width="19" height="19" viewBox="0 0 19 19"><rect x="0.7" y="0.7" width="17.6" height="17.4" rx="3.2" fill="#fff" stroke="#64b6ea" stroke-width="1.4"/></svg>
<div class="t" style="top:835.06px;font-size:18px;font-weight:400;color:#111;letter-spacing:0.1px;left:105.6px;font-kerning:none;">42</div>
<div class="t" style="top:835.06px;font-size:18px;font-weight:400;color:#111;letter-spacing:0.05px;left:282.5px;">Other Income</div>
<svg style="left:699.8px;top:833.8px" width="19" height="19" viewBox="0 0 19 19"><rect x="0.7" y="0.7" width="17.6" height="17.4" rx="3.2" fill="#fff" stroke="#64b6ea" stroke-width="1.4"/><path d="M3.4 8.6 L9 14.6 L18 3.6" stroke="#1a8ee0" stroke-width="2.1" fill="none"/></svg>
<svg style="left:875.8px;top:833.8px" width="19" height="19" viewBox="0 0 19 19"><rect x="0.7" y="0.7" width="17.6" height="17.4" rx="3.2" fill="#fff" stroke="#64b6ea" stroke-width="1.4"/><path d="M3.4 8.6 L9 14.6 L18 3.6" stroke="#1a8ee0" stroke-width="2.1" fill="none"/></svg>
<svg style="left:1061px;top:833.8px" width="19" height="19" viewBox="0 0 19 19"><rect x="0.7" y="0.7" width="17.6" height="17.4" rx="3.2" fill="#fff" stroke="#64b6ea" stroke-width="1.4"/></svg>
<svg style="left:1218px;top:833.8px" width="19" height="19" viewBox="0 0 19 19"><rect x="0.7" y="0.7" width="17.6" height="17.4" rx="3.2" fill="#fff" stroke="#64b6ea" stroke-width="1.4"/></svg>
<svg style="left:1422.6px;top:833.8px" width="19" height="19" viewBox="0 0 19 19"><rect x="0.7" y="0.7" width="17.6" height="17.4" rx="3.2" fill="#fff" stroke="#64b6ea" stroke-width="1.4"/></svg>
<svg style="left:1652.2px;top:833.8px" width="19" height="19" viewBox="0 0 19 19"><rect x="0.7" y="0.7" width="17.6" height="17.4" rx="3.2" fill="#fff" stroke="#64b6ea" stroke-width="1.4"/></svg>
<svg style="left:53.6px;top:875.8px" width="19" height="19" viewBox="0 0 19 19"><rect x="0.7" y="0.7" width="17.6" height="17.4" rx="3.2" fill="#f7f7f7" stroke="#64b6ea" stroke-width="1.4"/></svg>
<div class="t" style="top:877.06px;font-size:18px;font-weight:400;color:#111;letter-spacing:0.1px;left:105.6px;font-kerning:none;">100950</div>
<div class="t" style="top:877.06px;font-size:18px;font-weight:400;color:#111;letter-spacing:0.05px;left:282.5px;">Current Assets</div>
<svg style="left:699.8px;top:875.8px" width="19" height="19" viewBox="0 0 19 19"><rect x="0.7" y="0.7" width="17.6" height="17.4" rx="3.2" fill="#f7f7f7" stroke="#64b6ea" stroke-width="1.4"/></svg>
<svg style="left:875.8px;top:875.8px" width="19" height="19" viewBox="0 0 19 19"><rect x="0.7" y="0.7" width="17.6" height="17.4" rx="3.2" fill="#f7f7f7" stroke="#64b6ea" stroke-width="1.4"/></svg>
<svg style="left:1061px;top:875.8px" width="19" height="19" viewBox="0 0 19 19"><rect x="0.7" y="0.7" width="17.6" height="17.4" rx="3.2" fill="#f7f7f7" stroke="#64b6ea" stroke-width="1.4"/></svg>
<svg style="left:1218px;top:875.8px" width="19" height="19" viewBox="0 0 19 19"><rect x="0.7" y="0.7" width="17.6" height="17.4" rx="3.2" fill="#f7f7f7" stroke="#64b6ea" stroke-width="1.4"/></svg>
<svg style="left:1422.6px;top:875.8px" width="19" height="19" viewBox="0 0 19 19"><rect x="0.7" y="0.7" width="17.6" height="17.4" rx="3.2" fill="#f7f7f7" stroke="#64b6ea" stroke-width="1.4"/><path d="M3.4 8.6 L9 14.6 L18 3.6" stroke="#1a8ee0" stroke-width="2.1" fill="none"/></svg>
<svg style="left:1652.2px;top:875.8px" width="19" height="19" viewBox="0 0 19 19"><rect x="0.7" y="0.7" width="17.6" height="17.4" rx="3.2" fill="#f7f7f7" stroke="#64b6ea" stroke-width="1.4"/></svg>
<svg style="left:53.6px;top:917.3999999999999px" width="19" height="19" viewBox="0 0 19 19"><rect x="0.7" y="0.7" width="17.6" height="17.4" rx="3.2" fill="#fff" stroke="#64b6ea" stroke-width="1.4"/></svg>
<div class="t" style="top:918.66px;font-size:18px;font-weight:400;color:#111;letter-spacing:0.1px;left:105.6px;font-kerning:none;">100850</div>
<div class="t" style="top:918.66px;font-size:18px;font-weight:400;color:#111;letter-spacing:0.05px;left:282.5px;">Withholdings Received</div>
<svg style="left:699.8px;top:917.3999999999999px" width="19" height="19" viewBox="0 0 19 19"><rect x="0.7" y="0.7" width="17.6" height="17.4" rx="3.2" fill="#fff" stroke="#64b6ea" stroke-width="1.4"/></svg>
<svg style="left:875.8px;top:917.3999999999999px" width="19" height="19" viewBox="0 0 19 19"><rect x="0.7" y="0.7" width="17.6" height="17.4" rx="3.2" fill="#fff" stroke="#64b6ea" stroke-width="1.4"/></svg>
<svg style="left:1061px;top:917.3999999999999px" width="19" height="19" viewBox="0 0 19 19"><rect x="0.7" y="0.7" width="17.6" height="17.4" rx="3.2" fill="#fff" stroke="#64b6ea" stroke-width="1.4"/><path d="M3.4 8.6 L9 14.6 L18 3.6" stroke="#1a8ee0" stroke-width="2.1" fill="none"/></svg>
<svg style="left:1218px;top:917.3999999999999px" width="19" height="19" viewBox="0 0 19 19"><rect x="0.7" y="0.7" width="17.6" height="17.4" rx="3.2" fill="#fff" stroke="#64b6ea" stroke-width="1.4"/></svg>
<svg style="left:1422.6px;top:917.3999999999999px" width="19" height="19" viewBox="0 0 19 19"><rect x="0.7" y="0.7" width="17.6" height="17.4" rx="3.2" fill="#fff" stroke="#64b6ea" stroke-width="1.4"/></svg>
<svg style="left:1652.2px;top:917.3999999999999px" width="19" height="19" viewBox="0 0 19 19"><rect x="0.7" y="0.7" width="17.6" height="17.4" rx="3.2" fill="#fff" stroke="#64b6ea" stroke-width="1.4"/><path d="M3.4 8.6 L9 14.6 L18 3.6" stroke="#1a8ee0" stroke-width="2.1" fill="none"/></svg>
<svg style="left:53.6px;top:959.1px" width="19" height="19" viewBox="0 0 19 19"><rect x="0.7" y="0.7" width="17.6" height="17.4" rx="3.2" fill="#f7f7f7" stroke="#64b6ea" stroke-width="1.4"/></svg>
<div class="t" style="top:960.36px;font-size:18px;font-weight:400;color:#111;letter-spacing:0.1px;left:105.6px;font-kerning:none;">100300</div>
<div class="t" style="top:960.36px;font-size:18px;font-weight:400;color:#111;letter-spacing:0.05px;left:282.5px;">Merchandise</div>
<svg style="left:699.8px;top:959.1px" width="19" height="19" viewBox="0 0 19 19"><rect x="0.7" y="0.7" width="17.6" height="17.4" rx="3.2" fill="#f7f7f7" stroke="#64b6ea" stroke-width="1.4"/></svg>
<svg style="left:875.8px;top:959.1px" width="19" height="19" viewBox="0 0 19 19"><rect x="0.7" y="0.7" width="17.6" height="17.4" rx="3.2" fill="#f7f7f7" stroke="#64b6ea" stroke-width="1.4"/></svg>
<svg style="left:1061px;top:959.1px" width="19" height="19" viewBox="0 0 19 19"><rect x="0.7" y="0.7" width="17.6" height="17.4" rx="3.2" fill="#f7f7f7" stroke="#64b6ea" stroke-width="1.4"/><path d="M3.4 8.6 L9 14.6 L18 3.6" stroke="#1a8ee0" stroke-width="2.1" fill="none"/></svg>
<svg style="left:1218px;top:959.1px" width="19" height="19" viewBox="0 0 19 19"><rect x="0.7" y="0.7" width="17.6" height="17.4" rx="3.2" fill="#f7f7f7" stroke="#64b6ea" stroke-width="1.4"/></svg>
<svg style="left:1422.6px;top:959.1px" width="19" height="19" viewBox="0 0 19 19"><rect x="0.7" y="0.7" width="17.6" height="17.4" rx="3.2" fill="#f7f7f7" stroke="#64b6ea" stroke-width="1.4"/></svg>
<svg style="left:1652.2px;top:959.1px" width="19" height="19" viewBox="0 0 19 19"><rect x="0.7" y="0.7" width="17.6" height="17.4" rx="3.2" fill="#f7f7f7" stroke="#64b6ea" stroke-width="1.4"/></svg>
<div class="r" style="left:1780px;top:822.5px;width:12px;height:180.5px;background:#f1f1f1;"></div>
<div class="r" style="left:1781px;top:834.5px;width:10px;height:12.5px;background:#c1c1c1;"></div>
<svg style="left:1780px;top:824px" width="12" height="10" viewBox="0 0 12 10"><path d="M3 6.5 L6 3.5 L9 6.5Z" fill="#a3a3a3"/></svg>
<svg style="left:1780px;top:990px" width="12" height="10" viewBox="0 0 12 10"><path d="M3 3.5 L6 6.5 L9 3.5Z" fill="#505050"/></svg>
<div class="r" style="left:26px;top:1003px;width:1766px;height:9px;background:#f1f1f1;"></div>
<div class="r" style="left:38px;top:1002.5px;width:1112px;height:8.3px;background:#bcbcbc;"></div>
<svg style="left:26px;top:1002px" width="12" height="10" viewBox="0 0 12 10"><path d="M7 2.5 L4 5 L7 7.5Z" fill="#a3a3a3"/></svg>
<svg style="left:1766px;top:1002px" width="12" height="10" viewBox="0 0 12 10"><path d="M5 2.5 L8 5 L5 7.5Z" fill="#505050"/></svg>
<div class="r" style="left:1780px;top:1003px;width:12px;height:9px;background:#dcdcdc;"></div>
<div class="r" style="left:1854.8px;top:602px;width:2px;height:35px;background:#5c8db3;"></div>
<div class="r" style="left:1862px;top:111px;width:58px;height:937px;background:#02a4f6;"></div>
<div class="r" style="left:1889px;top:111px;width:31px;height:937px;background:#04a0e3;"></div>
<svg style="left:1870px;top:124px" width="20" height="20" viewBox="0 0 20 20"><path d="M12.6 5.2 L6.9 10.4 L12.6 15.6" stroke="#fff" stroke-width="3.1" fill="none"/></svg>
<svg style="left:1899px;top:124px" width="20" height="20" viewBox="0 0 20 20"><path d="M12.6 5.2 L6.9 10.4 L12.6 15.6" stroke="#fff" stroke-width="3.1" fill="none"/></svg>
<div class="t" style="left:1864.2px;top:1026px;font-size:20px;font-weight:400;-webkit-text-stroke:0.45px #fff;color:#fff;transform-origin:0 0;transform:rotate(-90deg);letter-spacing:0.1px;">Messages</div>
<div class="t" style="left:1894.2px;top:1026px;font-size:20px;font-weight:400;-webkit-text-stroke:0.45px #fff;color:#fff;transform-origin:0 0;transform:rotate(-90deg);letter-spacing:0.1px;">Properties Panel</div>
<div class="r" style="left:0px;top:1048px;width:1920px;height:32px;background:#0381d6;"></div>
<div class="r" style="left:0px;top:1048px;width:1920px;height:1px;background:#0a6fbf;"></div>
<div class="t" style="top:1053.77px;font-size:20px;font-weight:400;color:#fff;letter-spacing:0.3px;left:11px;-webkit-text-stroke:0.6px #fff;">Impact Analyzer</div>
<svg style="left:1894px;top:1058px" width="18" height="14" viewBox="0 0 18 14"><path d="M3 10.5 L9 4.5 L15 10.5" stroke="#fff" stroke-width="2.8" fill="none"/></svg>
</body></html>
